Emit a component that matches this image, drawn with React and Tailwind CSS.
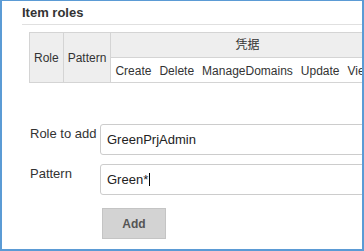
export default function App() {
  const font = { fontFamily: '"Liberation Sans", Arial, "Noto Sans CJK SC", sans-serif' };
  return (
    <div
      className="w-[364px] h-[251px] bg-white border-[#5b9bd5] border-t border-l-2 border-r-2 border-b-2 overflow-hidden text-[#333]"
      style={font}
    >
      <div className="pl-5 pt-[3px]">
        <div className="text-[13px] font-bold leading-[18px] text-[#333]">Item roles</div>
        <div className="mt-[2px] h-px bg-[#e0e0e0]" />
        <div className="pl-[7px] pt-[7px]">
          <table className="border-collapse text-[12px] leading-[14px] whitespace-nowrap">
            <thead>
              <tr className="h-[25px]">
                <th rowSpan={2} className="bg-[#eeeeee] border border-[#d4d4d4] font-normal px-[4px] text-[#333]">Role</th>
                <th rowSpan={2} className="bg-[#eeeeee] border border-[#d4d4d4] font-normal px-[4px] text-[#333]">Pattern</th>
                <th colSpan={6} className="bg-[#eeeeee] border border-[#d4d4d4] font-normal text-[#333] text-left pl-[124px]">凭据</th>
              </tr>
              <tr className="h-[25px]">
                <td className="border-b border-[#d4d4d4] px-[4px] pt-[2px]">Create</td>
                <td className="border-b border-[#d4d4d4] px-[4px] pt-[2px]">Delete</td>
                <td className="border-b border-[#d4d4d4] px-[4px] pt-[2px]">ManageDomains</td>
                <td className="border-b border-[#d4d4d4] px-[4px] pt-[2px]">Update</td>
                <td className="border-b border-[#d4d4d4] px-[4px] pt-[2px]">View</td>
                <td className="border-b border-r border-[#d4d4d4] px-[4px] pt-[2px]">Configure</td>
              </tr>
            </thead>
          </table>
        </div>
      </div>
      <div className="pl-[28px] mt-[41px] text-[13px] text-[#333]">
        <div className="flex">
          <div className="w-[70px] shrink-0 whitespace-nowrap pt-[2px] leading-[15px]">Role to add</div>
          <div className="w-[280px] shrink-0 h-[31px] border border-[#cccccc] rounded-[3px] flex items-center pl-[6px] text-[#222]">GreenPrjAdmin</div>
        </div>
        <div className="flex mt-[9px]">
          <div className="w-[70px] shrink-0 whitespace-nowrap pt-[2px] leading-[15px]">Pattern</div>
          <div className="w-[280px] shrink-0 h-[31px] border border-[#cccccc] rounded-[3px] flex items-center pl-[6px] text-[#222]">
            Green*<span className="inline-block w-px h-[13px] bg-black ml-px" />
          </div>
        </div>
        <div className="pl-[72px] mt-[13px]">
          <div className="w-[64px] h-[31px] bg-[#d3d3d3] border border-[#c4c4c4] flex items-center justify-center text-[12px] font-bold text-[#555]">Add</div>
        </div>
      </div>
    </div>
  );
}
